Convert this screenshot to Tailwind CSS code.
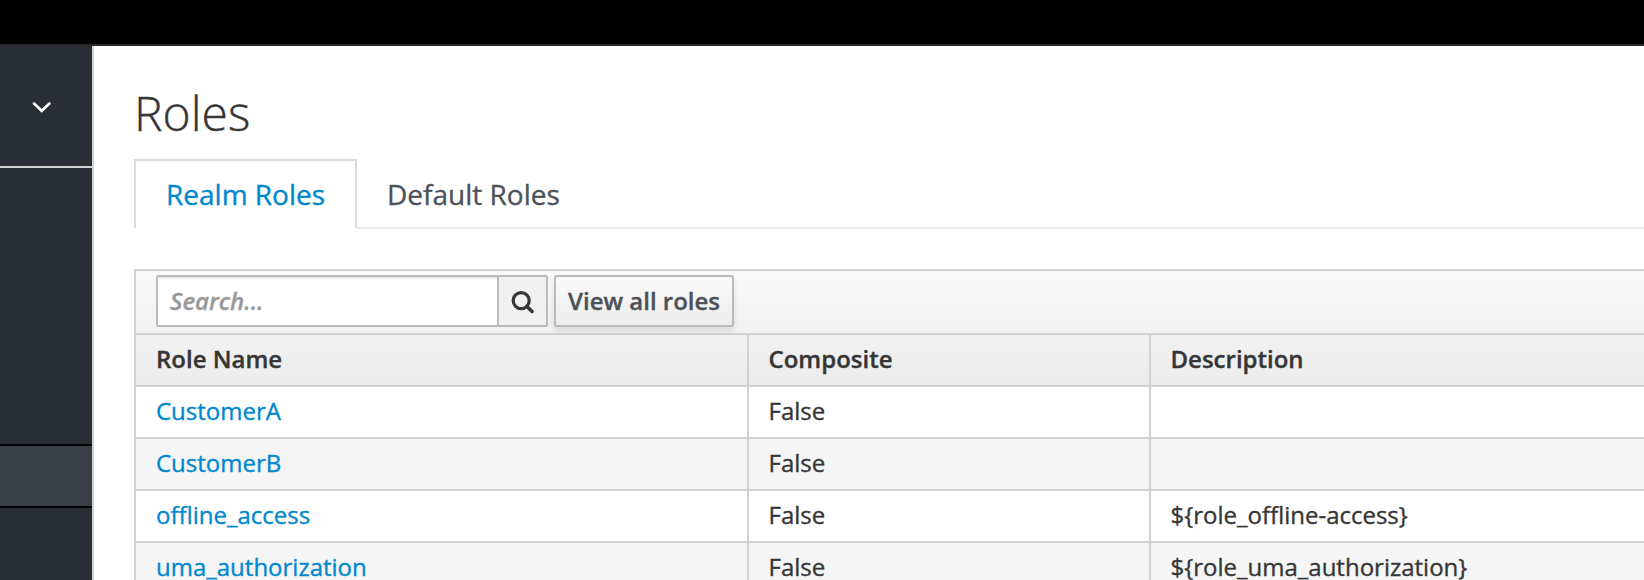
<!DOCTYPE html>
<html lang="en">
<head>
<meta charset="utf-8">
<title>Roles</title>
<script src="https://cdn.jsdelivr.net/npm/@tailwindcss/browser@4"></script>
</head>
<body class="flex h-[580px] w-[1644px] flex-col overflow-hidden bg-white font-['Open_Sans',sans-serif] text-[24px] leading-[40px] text-[#363636] [-webkit-text-stroke:0.35px]">
<header class="h-[46px] shrink-0 border-b-2 border-[#292929] bg-black"></header>
<div class="flex min-h-0 flex-1">
  <aside class="flex w-[94px] shrink-0 flex-col border-r-2 border-[#d1d1d1] bg-[#292e34]">
    <div class="h-[122px] shrink-0 border-b-2 border-[#d1d1d1] pt-[54px] pl-[31px]">
      <svg class="block" width="22" height="16" viewBox="0 0 22 16" fill="none" stroke="#fff" stroke-width="2.7" stroke-linecap="round" stroke-linejoin="miter"><path d="M3 3.6 L10.7 10.8 L18.5 3.6"/></svg>
    </div>
    <div class="h-[276px] shrink-0"></div>
    <div class="h-[64px] shrink-0 border-y-2 border-black bg-[#393f44]"></div>
  </aside>
  <main class="min-w-0 flex-1 overflow-hidden pl-10">
    <h1 class="mt-[39px] h-[74px] text-[48px] leading-[56px] font-light">Roles</h1>
    <nav class="flex h-[70px] text-[28px] leading-[66px]">
      <a class="w-[223px] border-2 border-[#dbdbdb] border-b-white pl-[30px] text-[#0088ce]">Realm Roles</a>
      <a class="flex-1 border-b-2 border-[#ebebeb] pt-[2px] pl-[30px] text-[#4d5258]">Default Roles</a>
    </nav>
    <div class="mt-10 w-[1560px] border-2 border-[#d1d1d1]">
      <div class="flex h-[62px] bg-linear-to-b from-[#fafafa] to-[#f1f1f1] pt-1 pl-5">
        <div class="flex h-[52px] w-[392px] rounded-[2px] border-2 border-[#bbb] bg-white">
          <div class="w-[339px] pl-3 leading-[48px] font-semibold italic text-[#999] shadow-[inset_0_2px_2px_rgba(3,3,3,0.075)]">Search...</div>
          <div class="flex flex-1 justify-center border-l-2 border-[#bbb] bg-[#f1f1f1] pt-[12px]">
            <svg class="block" width="24" height="26" viewBox="0 0 24 26" fill="none" stroke="#363636"><circle cx="10.2" cy="11.6" r="8" stroke-width="3.2"/><path d="M16 17.5 L21 22.5" stroke-width="3.6" stroke-linecap="round"/></svg>
          </div>
        </div>
        <button class="ml-[6px] h-[52px] w-[180px] rounded-[2px] border-2 border-[#bbb] bg-linear-to-b from-[#fafafa] to-[#ededed] leading-[48px] font-semibold whitespace-nowrap text-[#4d5258] shadow-[0_4px_6px_rgba(3,3,3,0.1)]">View all roles</button>
      </div>
      <div class="grid h-[54px] grid-cols-[613px_402px_1fr] border-y-2 border-[#d1d1d1] bg-linear-to-b from-[#f2f2f2] to-[#ebebeb] leading-[47px] font-semibold">
        <div class="border-r-2 border-[#d1d1d1] pl-5">Role Name</div><div class="border-r-2 border-[#d1d1d1] pl-[19.5px]">Composite</div><div class="pl-[19.5px]">Description</div>
      </div>
      <div class="grid h-[52px] grid-cols-[613px_402px_1fr] border-b-2 border-[#d1d1d1] leading-[47px]">
        <a class="border-r-2 border-[#d1d1d1] pl-5 text-[#0088ce]">CustomerA</a><div class="border-r-2 border-[#d1d1d1] pl-[19.5px]">False</div><div class="pl-5"></div>
      </div>
      <div class="grid h-[52px] grid-cols-[613px_402px_1fr] border-b-2 border-[#d1d1d1] bg-[#f5f5f5] leading-[47px]">
        <a class="border-r-2 border-[#d1d1d1] pl-5 text-[#0088ce]">CustomerB</a><div class="border-r-2 border-[#d1d1d1] pl-[19.5px]">False</div><div class="pl-5"></div>
      </div>
      <div class="grid h-[52px] grid-cols-[613px_402px_1fr] border-b-2 border-[#d1d1d1] leading-[47px]">
        <a class="border-r-2 border-[#d1d1d1] pl-5 text-[#0088ce]">offline_access</a><div class="border-r-2 border-[#d1d1d1] pl-[19.5px]">False</div><div class="pl-[19.5px]">${role_offline-access}</div>
      </div>
      <div class="grid h-[52px] grid-cols-[613px_402px_1fr] border-b-2 border-[#d1d1d1] bg-[#f5f5f5] leading-[47px]">
        <a class="border-r-2 border-[#d1d1d1] pl-5 text-[#0088ce]">uma_authorization</a><div class="border-r-2 border-[#d1d1d1] pl-[19.5px]">False</div><div class="pl-[19.5px]">${role_uma_authorization}</div>
      </div>
    </div>
  </main>
</div>
</body>
</html>
